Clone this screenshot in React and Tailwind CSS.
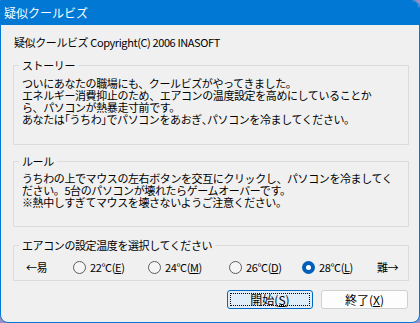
import React from 'react';

const temps = [
    { label: '22°C', key: 'E', width: 'w-[75px]', checked: false },
    { label: '24°C', key: 'M', width: 'w-[81px]', checked: false },
    { label: '26°C', key: 'D', width: 'w-[73px]', checked: false },
    { label: '28°C', key: 'L', width: 'w-[75px]', checked: true },
];

function Radio({ label, hotkey, checked, width }) {
    return (
        <label className={`${width} flex items-center gap-[4px] shrink-0`}>
            {checked ? (
                <span className="w-[13px] h-[13px] rounded-full bg-[#005fb8] flex items-center justify-center">
                    <span className="w-[5px] h-[5px] rounded-full bg-white" />
                </span>
            ) : (
                <span className="w-[13px] h-[13px] rounded-full border border-[#5d5d5d] bg-[#f5f5f5]" />
            )}
            <span>
                {label}(<span className="underline">{hotkey}</span>)
            </span>
        </label>
    );
}

// half-width punctuation, closer to the bitmap UI font
const H = ({ children }) => <span className="[font-feature-settings:'halt']">{children}</span>;

export default function App() {
    return (
        <div className="w-[420px] h-[323px] bg-[#9a8dc2] font-['Noto_Sans_CJK_JP',sans-serif] text-black">
            <div className="w-[420px] h-[323px] border border-[#0078d4] rounded-tr-[8px] rounded-b-[8px] overflow-hidden bg-[#f0f0f0] flex flex-col">
                {/* title bar */}
                <div className="h-[24px] shrink-0 bg-[#0078d4] flex items-center pl-[3px] text-white text-[12px] leading-[12px]">
                    疑似クールビズ
                </div>

                <div className="pl-[12px] pr-[10px] pt-[11px] text-[11px] leading-[12px] tracking-[-0.4px] whitespace-nowrap">
                    <p className="pl-[1px]">疑似クールビズ Copyright(C) 2006 INASOFT</p>

                    {/* Story */}
                    <fieldset className="mt-[11px] border border-[#dcdcdc] pl-[5px] pb-[19px]">
                        <legend className="px-[3px]">ストーリー</legend>
                        <div className="mt-[6px] pl-[3px]">
                            ついにあなたの職場にも、クールビズがやってきました。<br />
                            エネルギー消費抑止のため、エアコンの温度設定を高めにしていることか<br />
                            ら、パソコンが熱暴走寸前です。<br />
                            あなたは<H>「</H>うちわ<H>」</H>でパソコンをあおぎ<H>、</H>パソコンを冷ましてください<H>。</H>
                        </div>
                    </fieldset>

                    {/* Rule */}
                    <fieldset className="mt-[10px] border border-[#dcdcdc] pl-[5px] pb-[18px]">
                        <legend className="px-[3px]">ルール</legend>
                        <div className="mt-[5px] pl-[3px]">
                            うちわの上でマウスの左右ボタンを交互にクリックし、パソコンを冷ましてく<br />
                            ださい。5台のパソコンが壊れたらゲームオーバーです。<br />
                            ※熱中しすぎてマウスを壊さないようご注意ください。
                        </div>
                    </fieldset>

                    {/* Temperature */}
                    <fieldset className="mt-[12px] border border-[#dcdcdc] pl-[5px] pb-[6px]">
                        <legend className="px-[3px]">エアコンの設定温度を選択してください</legend>
                        <div className="mt-[9px] pl-[7px] h-[14px] flex items-center">
                            <span className="w-[47px] shrink-0">←易</span>
                            {temps.map((t) => (
                                <Radio key={t.key} label={t.label} hotkey={t.key} checked={t.checked} width={t.width} />
                            ))}
                            <span>難→</span>
                        </div>
                    </fieldset>

                    {/* Buttons */}
                    <div className="mt-[9px] pr-[1px] flex justify-end gap-[8px]">
                        <button className="w-[86px] h-[19px] rounded-[3px] border border-[#0067c0] bg-[#e0eef9] p-[2px]">
                            <span className="w-full h-full flex items-center justify-center outline-1 outline-dotted outline-black -outline-offset-1 text-[12px] tracking-normal">
                                開始(<span className="underline">S</span>)
                            </span>
                        </button>
                        <button className="w-[87px] h-[19px] rounded-[3px] border border-[#d0d0d0] bg-[#fdfdfd] flex items-center justify-center text-[12px] tracking-normal">
                            終了(<span className="underline">X</span>)
                        </button>
                    </div>
                </div>
            </div>
        </div>
    );
}
